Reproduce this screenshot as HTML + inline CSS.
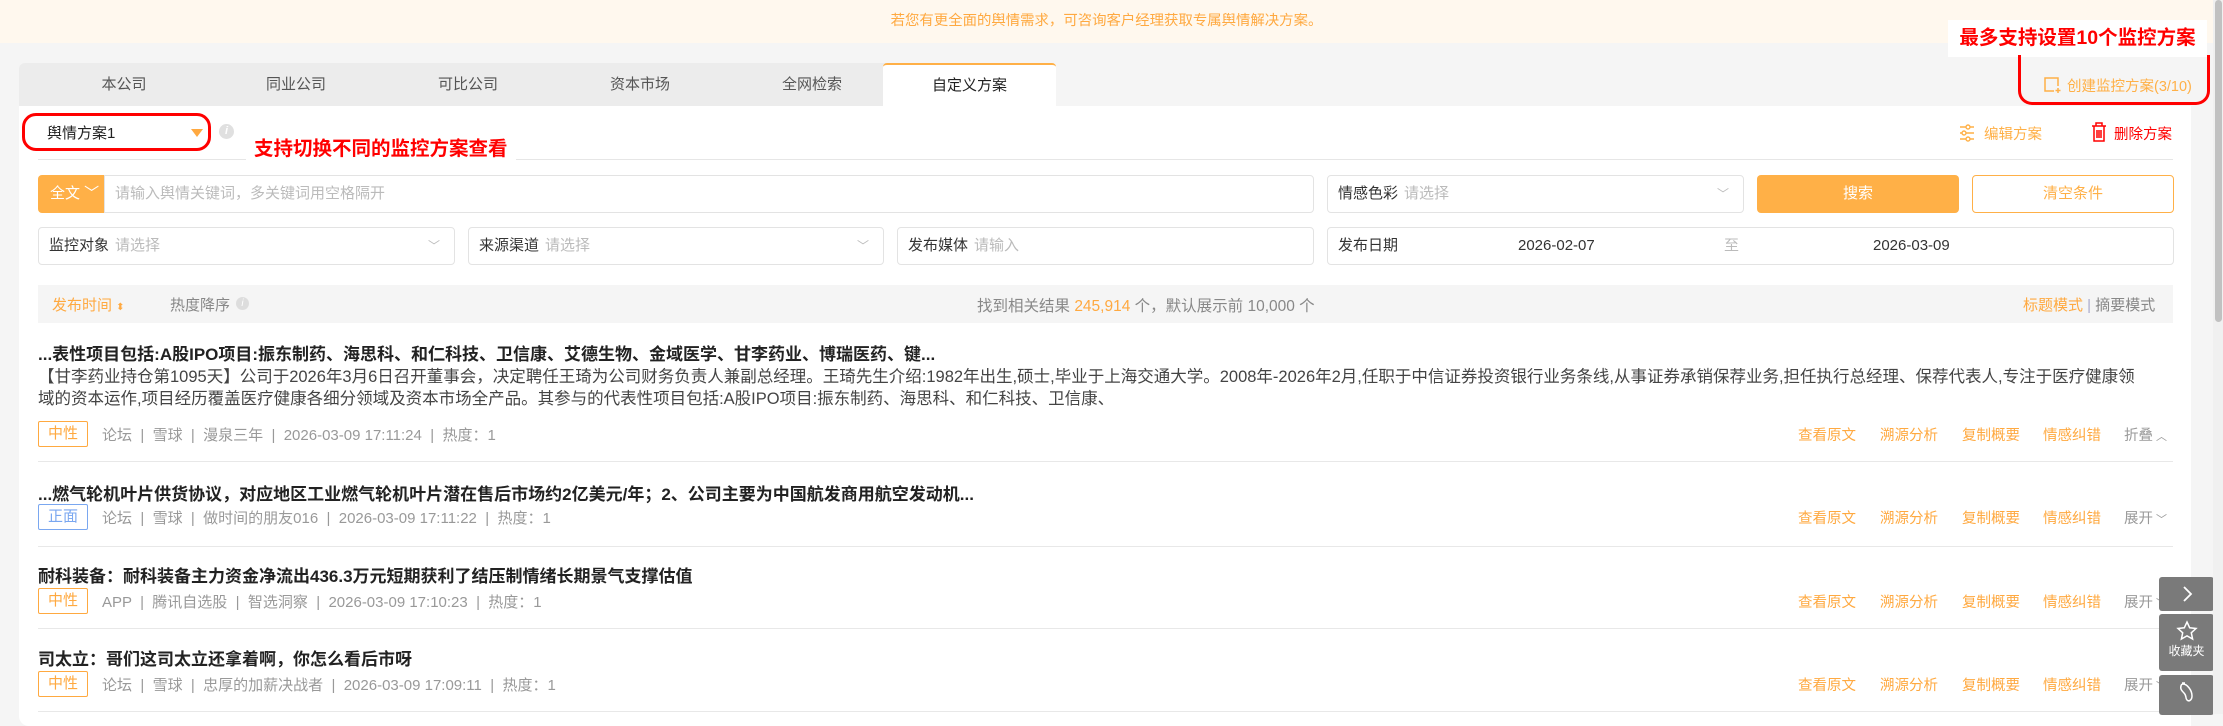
<!DOCTYPE html>
<html><head><meta charset="utf-8">
<style>
*{margin:0;padding:0;box-sizing:border-box}
body{width:2223px;height:714px;overflow:hidden;background:#f5f5f5;font-family:"Liberation Sans","Noto Sans CJK SC",sans-serif;font-size:14px;color:#333;position:relative}
.a{position:absolute;white-space:nowrap}
.banner{left:0;top:0;width:2213px;height:43px;background:#fff8ee;color:#ffa940;font-size:14.4px;text-align:center;line-height:43px}
.tabs{left:19px;top:63px;width:1037px;height:43px;background:#ececec;border-radius:6px 6px 0 0}
.tab{position:absolute;top:0;height:43px;width:172px;text-align:center;line-height:43px;font-size:15px;color:#555}
.panel{left:19px;top:106px;width:2172px;height:620px;background:#fff;border-radius:0 0 0 10px}
.box{position:absolute;border:1px solid #e3e3e3;border-radius:4px;background:#fff;height:38px;line-height:36px;font-size:15px;color:#333;padding-left:10px}
.ph{color:#bbb;margin-left:6px}
.chev{position:absolute;right:14px;top:0;color:#bbb;font-size:12px}
.title{font-size:17px;font-weight:bold;color:#222}
.tag{position:absolute;width:50px;height:26px;border:1px solid #ffa940;color:#ffa940;border-radius:2px;text-align:center;line-height:24px;font-size:15px}
.meta{color:#999;font-size:15px}
.act{color:#ffa940;font-size:14.5px}
.fold{color:#999;font-size:14.5px}
.fold i{font-style:normal;font-size:11px;margin-left:3px}
.hr{position:absolute;left:38px;width:2135px;height:1px;background:#e8e8e8}
.side{position:absolute;left:2159px;width:55px;background:#7a7a7a;border-radius:3px;color:#fff;text-align:center}
</style></head><body>
<div class="a banner">若您有更全面的舆情需求，可咨询客户经理获取专属舆情解决方案。</div>
<div class="a tabs">
<div class="tab" style="left:19px">本公司</div>
<div class="tab" style="left:191px">同业公司</div>
<div class="tab" style="left:363px">可比公司</div>
<div class="tab" style="left:535px">资本市场</div>
<div class="tab" style="left:707px">全网检索</div>
<div class="tab" style="left:864px;width:173px;background:#fff;border-top:2px solid #ffb047;border-radius:4px 4px 0 0;color:#222;line-height:41px">自定义方案</div>
</div>
<div class="a panel"></div>
<div class="a" style="left:22px;top:113px;width:189px;height:38px;border:3px solid #f00;border-radius:14px"></div>
<div class="a" style="left:47px;top:122px;font-size:15px;color:#222">舆情方案1</div>
<div class="a" style="left:191px;top:129px;width:0;height:0;border-left:6px solid transparent;border-right:6px solid transparent;border-top:8px solid #ffa940"></div>
<div class="a" style="left:219px;top:124px;width:15px;height:15px;border-radius:50%;background:#e0e0e0;color:#fff;font-size:11px;font-style:italic;text-align:center;line-height:15px;font-weight:bold">i</div>
<div class="a" style="left:38px;top:159px;width:2135px;height:1px;background:#e6e6e6"></div>
<div class="a" style="left:246px;top:136px;height:26px;padding:0 8px;background:#fff;color:#f00;font-size:19.5px;font-weight:bold;line-height:26px">支持切换不同的监控方案查看</div>
<div class="a" style="left:1948px;top:20px;width:259px;height:37px;background:#fff;color:#f00;font-size:19.5px;font-weight:bold;text-align:center;line-height:37px">最多支持设置10个监控方案</div>
<div class="a" style="left:2018px;top:55px;width:192px;height:50px;border:3px solid #f00;border-top:none;border-radius:0 0 14px 14px"></div>
<div class="a" style="left:2018px;top:55px;width:14px;height:14px;border-left:3px solid #f00"></div>
<div class="a" style="left:2196px;top:55px;width:14px;height:14px;border-right:3px solid #f00"></div>
<svg class="a" style="left:2043px;top:76px" width="20" height="18" viewBox="0 0 20 18"><path d="M11 15H2V2h13v8M15 12v5M12.5 14.5h5" fill="none" stroke="#ffb047" stroke-width="1.5"/></svg>
<div class="a" style="left:2067px;top:75px;color:#ffb047;font-size:14.5px">创建监控方案(3/10)</div>
<svg class="a" style="left:1959px;top:124px" width="16" height="18" viewBox="0 0 16 18"><g fill="none" stroke="#ffb047" stroke-width="1.4"><path d="M1 3h6M11 3h4M1 9h2M7 9h8M1 15h6M11 15h4"/><circle cx="9" cy="3" r="2"/><circle cx="5" cy="9" r="2"/><circle cx="9" cy="15" r="2"/></g></svg>
<div class="a" style="left:1984px;top:123px;color:#ffb047;font-size:14.5px">编辑方案</div>
<svg class="a" style="left:2091px;top:122px" width="16" height="20" viewBox="0 0 16 20"><g fill="none" stroke="#f00" stroke-width="1.5"><path d="M1 4h14M5 4V1h6v3M3 4v15h10V4M6 8v8M8 8v8M10 8v8"/></g></svg>
<div class="a" style="left:2114px;top:123px;color:#f00;font-size:14.5px">删除方案</div>
<div class="a" style="left:38px;top:175px;width:67px;height:38px;background:#ffb047;border-radius:4px 0 0 4px;color:#fff;line-height:38px;padding-left:12px;font-size:15px">全文 ﹀</div>
<div class="box" style="left:104px;top:175px;width:1210px;border-radius:0 4px 4px 0"><span class="ph" style="margin-left:0">请输入舆情关键词，多关键词用空格隔开</span></div>
<div class="box" style="left:1327px;top:175px;width:417px">情感色彩<span class="ph">请选择</span><span class="chev">﹀</span></div>
<div class="a" style="left:1757px;top:175px;width:202px;height:38px;background:#ffb047;border-radius:4px;color:#fff;text-align:center;line-height:38px;font-size:15px">搜索</div>
<div class="a" style="left:1972px;top:175px;width:202px;height:38px;border:1px solid #ffb047;border-radius:4px;color:#ffb047;text-align:center;line-height:36px;font-size:15px">清空条件</div>
<div class="box" style="left:38px;top:227px;width:417px">监控对象<span class="ph">请选择</span><span class="chev">﹀</span></div>
<div class="box" style="left:468px;top:227px;width:416px">来源渠道<span class="ph">请选择</span><span class="chev">﹀</span></div>
<div class="box" style="left:897px;top:227px;width:417px">发布媒体<span class="ph">请输入</span></div>
<div class="box" style="left:1327px;top:227px;width:847px">发布日期
<span class="a" style="left:190px;top:0">2026-02-07</span><span class="a" style="left:396px;top:0;color:#bbb">至</span><span class="a" style="left:545px;top:0">2026-03-09</span></div>
<div class="a" style="left:38px;top:285px;width:2135px;height:38px;background:#f5f5f5"></div>
<div class="a" style="left:52px;top:294px;font-size:15px;color:#ffa940">发布时间 <span style="font-size:10px">⬍</span></div>
<div class="a" style="left:170px;top:294px;font-size:15px;color:#888">热度降序</div>
<div class="a" style="left:236px;top:297px;width:13px;height:13px;border-radius:50%;background:#ddd;color:#fff;font-size:10px;text-align:center;line-height:13px;font-style:italic">i</div>
<div class="a" style="left:977px;top:294px;font-size:15.5px;color:#888">找到相关结果 <span style="color:#ffa940">245,914</span> 个，默认展示前 10,000 个</div>
<div class="a" style="left:2023px;top:294px;font-size:15px;color:#ffa940">标题模式 <span style="color:#aac">|</span> <span style="color:#888">摘要模式</span></div>
<div class="a title" style="left:38px;top:340px">...表性项目包括:A股IPO项目:振东制药、海思科、和仁科技、卫信康、艾德生物、金域医学、甘李药业、博瑞医药、键...</div>
<div class="a" style="left:38px;top:366px;width:2112px;white-space:normal;font-size:16.5px;line-height:22px;color:#444">【甘李药业持仓第1095天】公司于2026年3月6日召开董事会，决定聘任王琦为公司财务负责人兼副总经理。王琦先生介绍:1982年出生,硕士,毕业于上海交通大学。2008年-2026年2月,任职于中信证券投资银行业务条线,从事证券承销保荐业务,担任执行总经理、保荐代表人,专注于医疗健康领域的资本运作,项目经历覆盖医疗健康各细分领域及资本市场全产品。其参与的代表性项目包括:A股IPO项目:振东制药、海思科、和仁科技、卫信康、</div>
<div class="tag" style="left:38px;top:421px">中性</div>
<div class="a meta" style="left:102px;top:424px">论坛 &nbsp;| &nbsp;雪球 &nbsp;| &nbsp;漫泉三年 &nbsp;| &nbsp;2026-03-09 17:11:24 &nbsp;| &nbsp;热度：1</div>
<div class="hr" style="top:461px"></div>
<div class="a title" style="left:38px;top:480px">...燃气轮机叶片供货协议，对应地区工业燃气轮机叶片潜在售后市场约2亿美元/年；2、公司主要为中国航发商用航空发动机...</div>
<div class="tag" style="left:38px;top:504px;border-color:#7aa7f0;color:#7aa7f0">正面</div>
<div class="a meta" style="left:102px;top:507px">论坛 &nbsp;| &nbsp;雪球 &nbsp;| &nbsp;做时间的朋友016 &nbsp;| &nbsp;2026-03-09 17:11:22 &nbsp;| &nbsp;热度：1</div>
<div class="hr" style="top:546px"></div>
<div class="a title" style="left:38px;top:562px">耐科装备：耐科装备主力资金净流出436.3万元短期获利了结压制情绪长期景气支撑估值</div>
<div class="tag" style="left:38px;top:588px">中性</div>
<div class="a meta" style="left:102px;top:591px">APP &nbsp;| &nbsp;腾讯自选股 &nbsp;| &nbsp;智选洞察 &nbsp;| &nbsp;2026-03-09 17:10:23 &nbsp;| &nbsp;热度：1</div>
<div class="hr" style="top:628px"></div>
<div class="a title" style="left:38px;top:645px">司太立：哥们这司太立还拿着啊，你怎么看后市呀</div>
<div class="tag" style="left:38px;top:671px">中性</div>
<div class="a meta" style="left:102px;top:674px">论坛 &nbsp;| &nbsp;雪球 &nbsp;| &nbsp;忠厚的加薪决战者 &nbsp;| &nbsp;2026-03-09 17:09:11 &nbsp;| &nbsp;热度：1</div>
<div class="hr" style="top:711px"></div>
<div class="a act" style="left:1798px;top:424px">查看原文</div><div class="a act" style="left:1880px;top:424px">溯源分析</div><div class="a act" style="left:1962px;top:424px">复制概要</div><div class="a act" style="left:2043px;top:424px">情感纠错</div><div class="a fold" style="left:2124px;top:424px">折叠<i>︿</i></div>
<div class="a act" style="left:1798px;top:507px">查看原文</div><div class="a act" style="left:1880px;top:507px">溯源分析</div><div class="a act" style="left:1962px;top:507px">复制概要</div><div class="a act" style="left:2043px;top:507px">情感纠错</div><div class="a fold" style="left:2124px;top:507px">展开<i>﹀</i></div>
<div class="a act" style="left:1798px;top:591px">查看原文</div><div class="a act" style="left:1880px;top:591px">溯源分析</div><div class="a act" style="left:1962px;top:591px">复制概要</div><div class="a act" style="left:2043px;top:591px">情感纠错</div><div class="a fold" style="left:2124px;top:591px">展开<i>﹀</i></div>
<div class="a act" style="left:1798px;top:674px">查看原文</div><div class="a act" style="left:1880px;top:674px">溯源分析</div><div class="a act" style="left:1962px;top:674px">复制概要</div><div class="a act" style="left:2043px;top:674px">情感纠错</div><div class="a fold" style="left:2124px;top:674px">展开<i>﹀</i></div>
<div class="side" style="top:577px;height:34px"><svg width="14" height="20" viewBox="0 0 14 20" style="margin-top:7px"><path d="M4 3l7 7-7 7" fill="none" stroke="#fff" stroke-width="1.8"/></svg></div>
<div class="side" style="top:614px;height:57px"><svg width="22" height="22" viewBox="0 0 22 22" style="margin-top:6px"><path d="M11 2l2.7 5.8 6.3.7-4.7 4.3 1.3 6.2L11 15.9 5.4 19l1.3-6.2L2 8.5l6.3-.7z" fill="none" stroke="#fff" stroke-width="1.5"/></svg><div style="font-size:12px;line-height:13px">收藏夹</div></div>
<div class="side" style="top:675px;height:40px"><svg width="20" height="24" viewBox="0 0 20 24" style="margin-top:6px"><path d="M6 3c4 0 9 6 9 12 0 4-3 6-5 4-2-2 0-4-3-7C5 10 3 8 4 5c0-1 1-2 2-2zM5 2h3" fill="none" stroke="#fff" stroke-width="1.5"/></svg></div>
<div class="a" style="left:2213px;top:0;width:10px;height:714px;background:#f0f0f0"></div>
<div class="a" style="left:2215px;top:0;width:7px;height:322px;background:#c1c1c1;border-radius:4px"></div>
</body></html>
